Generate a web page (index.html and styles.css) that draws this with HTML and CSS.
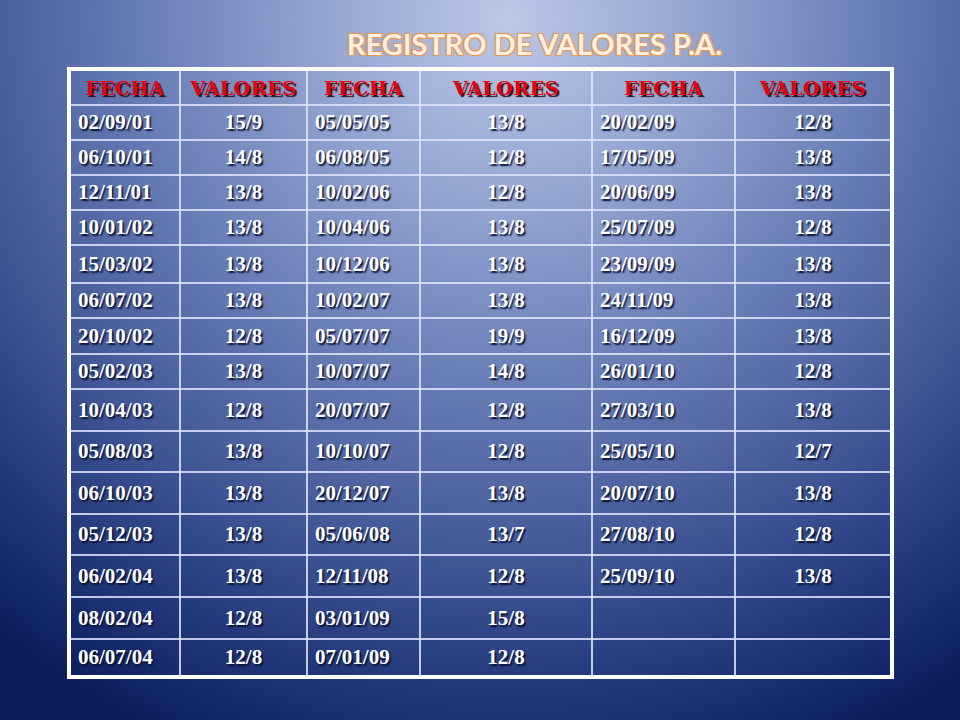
FILE: index.html
```html
<!DOCTYPE html>
<html lang="es">
<head>
<meta charset="utf-8">
<title>Registro de valores P.A.</title>
<link rel="stylesheet" href="styles.css">
</head>
<body>
<div class="slide">
  <h1 class="title">REGISTRO DE VALORES P.A.</h1>
  <table class="grid">
    <colgroup>
      <col class="c1"><col class="c2"><col class="c3"><col class="c4"><col class="c5"><col class="c6">
    </colgroup>
    <thead>
      <tr class="h36"><th>FECHA</th><th>VALORES</th><th>FECHA</th><th>VALORES</th><th>FECHA</th><th>VALORES</th></tr>
    </thead>
    <tbody>
      <tr class="h35"><td>02/09/01</td><td class="v">15/9</td><td>05/05/05</td><td class="v">13/8</td><td>20/02/09</td><td class="v">12/8</td></tr>
      <tr class="h35"><td>06/10/01</td><td class="v">14/8</td><td>06/08/05</td><td class="v">12/8</td><td>17/05/09</td><td class="v">13/8</td></tr>
      <tr class="h35"><td>12/11/01</td><td class="v">13/8</td><td>10/02/06</td><td class="v">12/8</td><td>20/06/09</td><td class="v">13/8</td></tr>
      <tr class="h35"><td>10/01/02</td><td class="v">13/8</td><td>10/04/06</td><td class="v">13/8</td><td>25/07/09</td><td class="v">12/8</td></tr>
      <tr class="h38"><td>15/03/02</td><td class="v">13/8</td><td>10/12/06</td><td class="v">13/8</td><td>23/09/09</td><td class="v">13/8</td></tr>
      <tr class="h35"><td>06/07/02</td><td class="v">13/8</td><td>10/02/07</td><td class="v">13/8</td><td>24/11/09</td><td class="v">13/8</td></tr>
      <tr class="h36"><td>20/10/02</td><td class="v">12/8</td><td>05/07/07</td><td class="v">19/9</td><td>16/12/09</td><td class="v">13/8</td></tr>
      <tr class="h35"><td>05/02/03</td><td class="v">13/8</td><td>10/07/07</td><td class="v">14/8</td><td>26/01/10</td><td class="v">12/8</td></tr>
      <tr class="h42"><td>10/04/03</td><td class="v">12/8</td><td>20/07/07</td><td class="v">12/8</td><td>27/03/10</td><td class="v">13/8</td></tr>
      <tr class="h41"><td>05/08/03</td><td class="v">13/8</td><td>10/10/07</td><td class="v">12/8</td><td>25/05/10</td><td class="v">12/7</td></tr>
      <tr class="h42"><td>06/10/03</td><td class="v">13/8</td><td>20/12/07</td><td class="v">13/8</td><td>20/07/10</td><td class="v">13/8</td></tr>
      <tr class="h41"><td>05/12/03</td><td class="v">13/8</td><td>05/06/08</td><td class="v">13/7</td><td>27/08/10</td><td class="v">12/8</td></tr>
      <tr class="h42"><td>06/02/04</td><td class="v">13/8</td><td>12/11/08</td><td class="v">12/8</td><td>25/09/10</td><td class="v">13/8</td></tr>
      <tr class="h42"><td>08/02/04</td><td class="v">12/8</td><td>03/01/09</td><td class="v">15/8</td><td></td><td></td></tr>
      <tr class="h38"><td>06/07/04</td><td class="v">12/8</td><td>07/01/09</td><td class="v">12/8</td><td></td><td></td></tr>
    </tbody>
  </table>
</div>
</body>
</html>
```

FILE: styles.css
```css
html, body {
  margin: 0;
  padding: 0;
}

.slide {
  width: 960px;
  height: 720px;
  overflow: hidden;
  background: radial-gradient(ellipse 80% 105% at 53% 3%, #bcc7e8 0%, #98a8d3 22%, #6e82ba 45%, #475d9b 68%, #273d80 86%, #0c1e5e 104%);
  display: flex;
  flex-direction: column;
}

.title {
  margin: 0 0 0 347px;
  height: 67px;
  box-sizing: border-box;
  padding-top: 25px;
  font-family: Lato, "Open Sans", sans-serif;
  font-weight: 700;
  font-size: 29px;
  line-height: 38px;
  color: #fbf0e4;
  letter-spacing: 0;
  text-shadow:
    1px 0 0 #e39a55, -1px 0 0 #e39a55, 0 1px 0 #e39a55, 0 -1px 0 #e39a55,
    1px 1px 0 #e39a55, -1px -1px 0 #e39a55, 1px -1px 0 #e39a55, -1px 1px 0 #e39a55,
    0 0 3px rgba(230, 140, 60, 0.6);
}

.grid {
  margin-left: 67px;
  width: 827px;
  table-layout: fixed;
  border-collapse: collapse;
  border: 4px solid #ffffff;
}

.c1 { width: 111px; }
.c2 { width: 127px; }
.c3 { width: 113px; }
.c4 { width: 172px; }
.c5 { width: 143px; }
.c6 { width: 157px; }

.grid th,
.grid td {
  border: 2px solid rgba(222, 228, 250, 0.85);
  padding: 0 0 0 7px;
  vertical-align: middle;
  white-space: nowrap;
}

.grid th {
  padding: 0;
  text-align: center;
  font-family: "DejaVu Serif", "Liberation Serif", serif;
  font-weight: 700;
  font-size: 19px;
  letter-spacing: 0.6px;
  color: #ec0010;
  text-shadow: 2px 2px 1px #2a0a10;
}

.grid td {
  text-align: left;
  font-family: "Liberation Serif", "Times New Roman", serif;
  font-weight: 700;
  font-size: 21px;
  color: #ffffff;
  text-shadow: 1.5px 1.5px 1.5px #0a1030;
}

.grid td.v {
  text-align: center;
  padding: 0;
}

.h35 { height: 35px; }
.h36 { height: 36px; }
.h38 { height: 38px; }
.h41 { height: 41px; }
.h42 { height: 42px; }
```
